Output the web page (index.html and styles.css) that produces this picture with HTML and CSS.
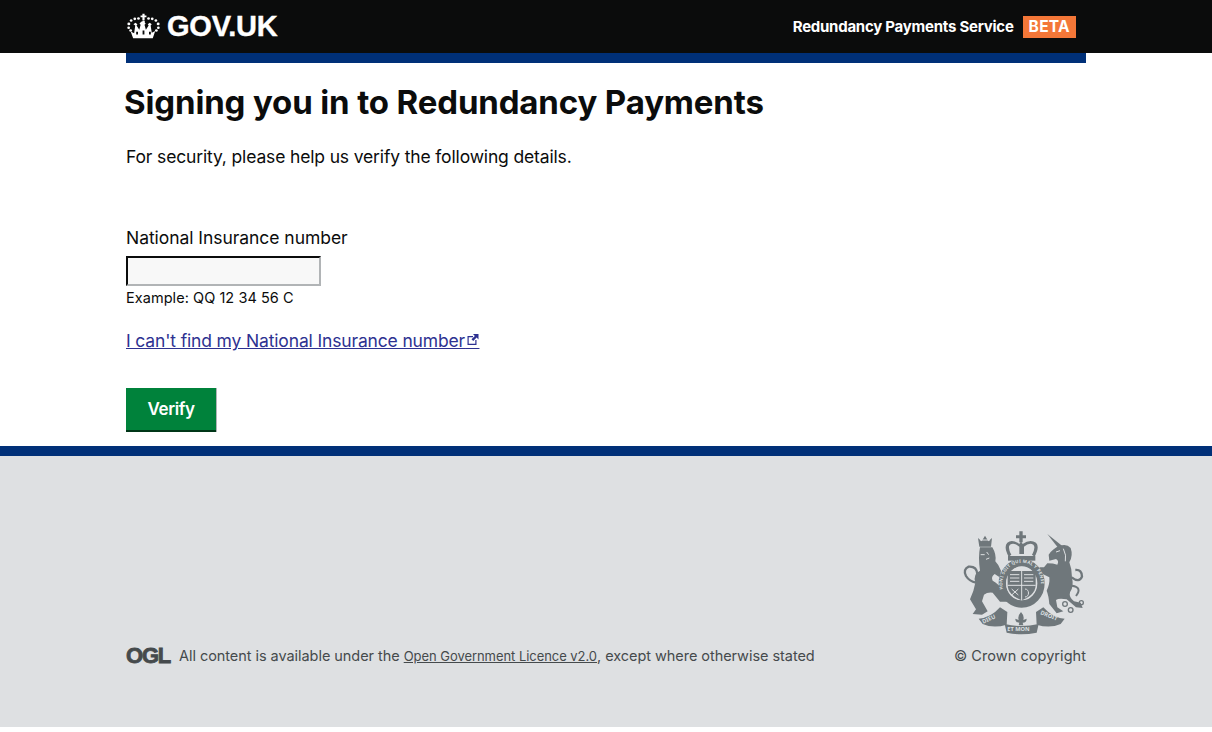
FILE: index.html
```html
<!DOCTYPE html>
<html lang="en">
<head>
<meta charset="utf-8">
<title>Signing you in to Redundancy Payments</title>
<link rel="stylesheet" href="styles.css">
</head>
<body>
<header class="site-header">
  <div class="wrap header-row">
    <a class="logo" href="#">
      <svg class="crown" viewBox="0 0 36 31" preserveAspectRatio="none" aria-hidden="true">
        <g fill="#fff">
          <path d="M16.800 1h2.400v2h2v2.200h-2v3.400h-2.400V5.200h-2V3h2z"/>
          <circle cx="18" cy="10.500" r="1.500"/>
          <circle cx="12.500" cy="6.500" r="1.500"/><circle cx="23.500" cy="6.500" r="1.500"/>
          <circle cx="8.500" cy="7" r="1.500"/><circle cx="27.500" cy="7" r="1.500"/>
          <circle cx="4.500" cy="9" r="1.500"/><circle cx="31.500" cy="9" r="1.500"/>
          <circle cx="2" cy="13" r="1.600"/><circle cx="34" cy="13" r="1.600"/>
          <circle cx="1.800" cy="17.500" r="1.500"/><circle cx="34.200" cy="17.500" r="1.500"/>
          <circle cx="4" cy="21" r="1.500"/><circle cx="32" cy="21" r="1.500"/>
          <path d="M7 13.500l2.200-2 2.200 2-1 1.500 3 5 1.500-6-1.300-1.200 2-2.600 1.400.6 1.400-.6 2 2.600-1.300 1.200 1.500 6 3-5-1-1.500 2.200-2 2.200 2-1.200 1.500 1.200 8.500 3.800-2-2.700 8.600H6.700L4 22l3.800 2 1.200-9z" fill-rule="evenodd"/>
        </g>
        <path d="M10 22.500h2v3h-2zM17 21h2v4.500h-2zM24 22.500h2v3h-2z" fill="#0b0c0c"/>
      </svg>
      <span class="logo-text">GOV.UK</span>
    </a>
    <div class="service">
      <span class="service-name">Redundancy Payments Service</span>
      <span class="beta">BETA</span>
    </div>
  </div>
</header>
<main class="wrap content">
  <div class="rule"></div>
  <h1 class="title">Signing you in to Redundancy Payments</h1>
  <p class="lead">For security, please help us verify the following details.</p>
  <form class="form">
    <label class="label" for="nino">National Insurance number</label>
    <input class="input" id="nino" type="text">
    <div class="hint">Example: QQ 12 34 56 C</div>
    <p class="help">
      <a class="ext-link" href="#">I can't find my National Insurance number<span class="ext-gap">&nbsp;<svg class="ext-icon" viewBox="0 0 12 12" aria-hidden="true"><path d="M0.500 2.500h5.500v1.200H1.700v6.600h6.600V6.500h1.200v5H0.500z" fill="currentColor"/><path d="M6 0.500h5.500V6L9.600 4.100 6.200 7.500 4.500 5.800l3.400-3.400z" fill="currentColor"/></svg></span></a>
    </p>
    <button class="button" type="button">Verify</button>
  </form>
</main>
<footer class="site-footer">
  <div class="wrap footer-row">
    <div class="licence">
      <span class="ogl">OGL</span>
      <span>All content is available under the <a class="licence-link" href="#">Open Government Licence v2.0</a>, except where otherwise stated</span>
    </div>
    <div class="copyright">
      <svg class="arms" viewBox="33 21 375 312" aria-hidden="true">
        <defs>
          <path id="garter-arc" d="M163 205A58 62 0 1 1 267 205"/>
        </defs>
        <g fill="#6f777b">
          <path d="M208 22h10v12h10v9h-10v12h-10V43h-10v-9h10z"/>
          <path d="M176 98Q160 68 172 56Q186 44 208 60L213 52L218 60Q240 44 258 56Q270 68 254 98L246 92Q258 70 250 62Q238 54 222 68V90H208V68Q192 54 180 62Q172 70 184 92Z"/>
          <path d="M174 96h82v14h-82z"/>
          <path d="M84 42L95 52L105 35L115 52L126 42L123 68H88Z"/>
          <path d="M90 70L127 70Q140 92 136 112Q146 122 153 140L149 160L134 150Q122 158 128 170Q146 178 156 200L173 233L150 233L128 206Q112 204 102 212L96 232L113 262L96 272L68 270L78 256L60 226Q72 200 76 176Q68 150 90 140Q84 100 90 70Z"/>
          <path d="M292 30L337 66L327 75Z"/>
          <path d="M328 66Q350 58 362 72Q370 95 358 115Q366 135 366 160Q372 190 360 205Q356 220 372 232L392 236L398 252L378 250L350 226Q326 222 318 228L322 250L340 262L320 268L298 240Q296 215 290 200Q300 180 298 160L278 150L268 130L282 130L292 118Q310 118 322 122Q328 110 318 105L298 110L296 92Q310 72 328 66Z"/>
          <path d="M86 284Q122 282 150 250L172 264L170 302Q130 314 98 300Z"/>
          <path d="M344 284Q308 282 280 250L258 264L260 302Q300 314 332 300Z"/>
          <path d="M164 300Q213 312 266 300L260 326Q213 336 170 326Z"/>
          <path d="M213 264Q224 276 220 288L230 284Q230 296 218 296L220 304H206L208 296Q196 296 196 284L206 288Q202 276 213 264Z"/>
        </g>
        <g fill="none" stroke="#6f777b">
          <path d="M78 176Q58 172 48 156Q38 136 56 128Q80 126 82 150" stroke-width="7"/>
          <path d="M365 160Q388 178 396 158Q396 136 376 138" stroke-width="7"/>
          <path d="M366 185Q398 190 378 216" stroke-width="6"/>
          <circle cx="345" cy="240" r="7" stroke-width="4"/>
          <circle cx="362" cy="258" r="7" stroke-width="4"/>
          <circle cx="394" cy="236" r="6" stroke-width="4"/>
          <ellipse cx="215" cy="178" rx="58" ry="62" stroke-width="22"/>
        </g>
        <ellipse cx="215" cy="178" rx="46" ry="50" fill="#dee0e2"/>
        <path d="M173 141h84v42c0 24-22 38-42 46-20-8-42-22-42-46z" fill="#6f777b"/>
        <g stroke="#dee0e2" stroke-width="3" fill="none">
          <path d="M215 141v88M173 184h84"/>
          <path d="M180 152h28M180 162h28M180 172h28M222 152h28M222 162h28M222 172h28"/>
          <path d="M185 195l20 18M205 195l-20 18M225 195c14 0 14 24 0 24"/>
          <path d="M92 92h12M110 84l6 8M108 106l10-4"/>
          <path d="M318 84l12-4M340 74q10 20 6 38"/>
          <path d="M90 48h30M180 66l4 22M250 66l-4 22"/>
        </g>
        <g fill="#dee0e2" font-family="'Noto Sans', sans-serif" font-weight="700">
          <text font-size="13" letter-spacing="1"><textPath href="#garter-arc" startOffset="4%">HONI SOIT QUI MAL Y PENSE</textPath></text>
          <text font-size="17" x="100" y="299" transform="rotate(-24 100 299)">DIEU</text>
          <text font-size="17" x="172" y="322">ET MON</text>
          <text font-size="17" x="270" y="270" transform="rotate(22 270 270)">DROIT</text>
        </g>
      </svg>
      <span class="copy-text">© Crown copyright</span>
    </div>
  </div>
</footer>
</body>
</html>
```
FILE: styles.css
```css
* { box-sizing: border-box; }
html, body { margin: 0; padding: 0; background: #fff; }
body {
  font-family: "Inter", "Liberation Sans", sans-serif;
  color: #0b0c0c;
  height: 732px;
  overflow: hidden;
}
.wrap { width: 960px; margin: 0 auto; }
.site-header { background: #0b0c0c; height: 53px; }
.header-row { display: flex; align-items: center; justify-content: space-between; height: 53px; padding-right: 10px; }
.logo { display: flex; align-items: center; gap: 7px; color: #fff; text-decoration: none; }
.crown { width: 33px; height: 26px; display: block; margin: -2px 0 0 1px; }
.logo-text { font: 700 29px/1 "Liberation Sans", sans-serif; letter-spacing: -0.2px; color: #fff; -webkit-text-stroke: 0.4px #fff; }
.service { display: flex; align-items: center; gap: 9px; }
.service-name { color: #fff; font-weight: 700; font-size: 15px; letter-spacing: -0.25px; }
.beta { background: #f47738; color: #fff; font-weight: 700; font-size: 15.500px; line-height: 22px; height: 22px; padding: 0 6px; letter-spacing: 0.3px; }
.rule { height: 10px; background: #003078; }
.content { height: 393px; }
.title { margin: 19px 0 0 -2px; font-size: 33px; line-height: 40px; font-weight: 700; letter-spacing: -0.14px; color: #0b0c0c; }
.lead { margin: 23px 0 0; font-size: 17.500px; line-height: 24px; letter-spacing: -0.15px; }
.form { margin-top: 57px; }
.label { display: block; font-size: 17.500px; line-height: 24px; letter-spacing: -0.05px; }
.input { display: block; width: 195px; height: 30px; margin-top: 6px; padding: 0; background: #f8f8f8; border: 2px solid; border-color: #0b0c0c #b1b4b6 #b1b4b6 #0b0c0c; border-radius: 0; }
.hint { margin-top: 3px; font-size: 14.500px; line-height: 18px; letter-spacing: 0.05px; }
.help { margin: 22px 0 0; font-size: 17.500px; line-height: 24px; letter-spacing: -0.15px; }
.ext-link { color: #2e3191; text-decoration: underline; }
.ext-gap { position: relative; letter-spacing: 9.500px; }
.ext-icon { position: absolute; right: 0; top: 3px; width: 12px; height: 13px; }
.button { display: block; margin-top: 35px; width: 90px; height: 44px; padding: 1px 0 0; font: 600 17px/1 "Inter", sans-serif; color: #fff; background: #00823b; border: 0; border-bottom: 2px solid #003618; box-shadow: 1px 0 0 #b1b4b6; letter-spacing: -0.4px; }
.site-footer { height: 281px; background: #dee0e2; border-top: 10px solid #003078; }
.footer-row { display: flex; justify-content: space-between; align-items: flex-end; height: 271px; padding-bottom: 62px; color: #454a4c; font-size: 14.500px; line-height: 18px; }
.licence { display: flex; align-items: center; gap: 10px; letter-spacing: -0.05px; }
.ogl { font: 900 22px/18px "Liberation Sans", sans-serif; color: #454a4c; letter-spacing: -1.200px; width: 43px; -webkit-text-stroke: 0.8px #454a4c; }
.licence-link { color: #454a4c; font-size: 13px; text-decoration: underline; }
.copyright { display: flex; flex-direction: column; align-items: flex-end; gap: 12px; }
.arms { width: 125px; height: 104px; display: block; }
.copy-text { display: block; letter-spacing: 0.05px; }
```
